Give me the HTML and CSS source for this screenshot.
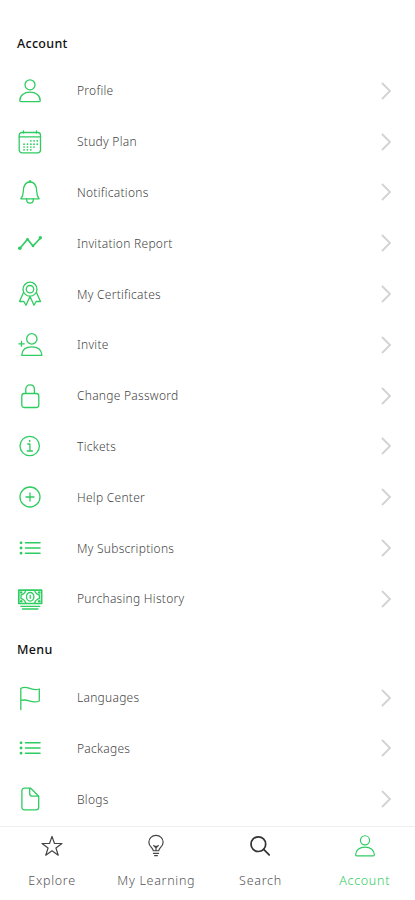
FILE: index.html
```html
<!DOCTYPE html>
<html lang="en">
<head>
  <meta charset="UTF-8">
  <meta name="viewport" content="width=device-width, initial-scale=1.0">
  <title>Account</title>
  <link rel="stylesheet" href="styles.css">
</head>
<body>
  <svg class="sprite" width="0" height="0">
    <symbol id="user" viewBox="0 0 24 24">
      <circle cx="12" cy="5.8" r="5"/>
      <path d="M1.8 21.5C1.800 16.500 6 13.200 12 13.200s10.200 3.300 10.200 8.300c0 .8-.4 1.200-1.200 1.200H3c-.8 0-1.200-.4-1.200-1.200z"/>
    </symbol>
    <symbol id="list" viewBox="0 0 24 24">
      <path d="M7.500 6.800H22M7.500 12H22M7.500 17.200H22" stroke-width="1.500"/>
      <path d="M3 6.800h.1M3 12h.1M3 17.200h.1" stroke-width="2.800"/>
    </symbol>
    <symbol id="chevron" viewBox="0 0 12 20">
      <path d="M2 2l8 8-8 8"/>
    </symbol>
  </svg>

  <main class="content">
    <section class="section">
      <h2>Account</h2>
      <ul class="menu-list">
        <li><a href="#">
          <svg class="icon"><use href="#user"/></svg>
          <span>Profile</span><svg class="arrow"><use href="#chevron"/></svg>
        </a></li>
        <li><a href="#">
          <svg class="icon" viewBox="0 0 24 24">
            <rect x="1.200" y="2.500" width="21.300" height="20.300" rx="2.800"/>
            <path d="M1.200 6.800h21.300M5.500 1v2M18.500 1v2"/>
            <path d="M12.800 10.800h.1M16 10.800h.1M19.200 10.800h.1M6 14.200h.1M9.400 14.200h.1M12.800 14.200h.1M16 14.200h.1M19.200 14.200h.1M6 17h.1M9.400 17h.1M12.800 17h.1M16 17h.1M6 19.800h.1M9.400 19.800h.1M12.800 19.800h.1" stroke-width="1.700"/>
          </svg>
          <span>Study Plan</span><svg class="arrow"><use href="#chevron"/></svg>
        </a></li>
        <li><a href="#">
          <svg class="icon" viewBox="0 0 24 24">
            <path d="M2.900 18.800c1.600-1.800 2.300-3.600 2.400-7.600C5.500 5.500 8 2 12 2s6.500 3.500 6.700 9.200c.1 4 .8 5.800 2.400 7.600z"/>
            <path d="M11.300 1.800V.9h1.400v.9M8.600 19c0 2.700 1.200 4.200 3.400 4.200s3.400-1.500 3.400-4.200"/>
          </svg>
          <span>Notifications</span><svg class="arrow"><use href="#chevron"/></svg>
        </a></li>
        <li><a href="#">
          <svg class="icon" viewBox="0 0 24 24">
            <path d="M2 17.200l7.500-8.900 5.500 6.700 7.500-8" stroke-width="1.700"/>
            <g class="filled"><circle cx="1.800" cy="17.200" r="1.800"/><circle cx="9.500" cy="8.200" r="1.300"/><circle cx="15" cy="15" r="1.300"/><circle cx="22.300" cy="6.800" r="1.700"/></g>
          </svg>
          <span>Invitation Report</span><svg class="arrow"><use href="#chevron"/></svg>
        </a></li>
        <li><a href="#">
          <svg class="icon" viewBox="0 0 24 24">
            <circle cx="12" cy="7.200" r="7"/>
            <circle cx="12" cy="7.200" r="3.700"/>
            <path d="M5.500 10.500L1.500 19.500l4.200-.2 2.300 4 4-8.700M18.500 10.500l4 9-4.200-.2-2.300 4-4-8.700"/>
          </svg>
          <span>My Certificates</span><svg class="arrow"><use href="#chevron"/></svg>
        </a></li>
        <li><a href="#">
          <svg class="icon" viewBox="0 0 24 24">
            <circle cx="13.800" cy="5.900" r="5.200"/>
            <path d="M3.700 22.300c.3-5.200 4-8.500 10.100-8.500s9.800 3.300 10.100 8.500z"/>
            <path d="M.8 10.800h5.400M3.500 8.400v4.800"/>
          </svg>
          <span>Invite</span><svg class="arrow"><use href="#chevron"/></svg>
        </a></li>
        <li><a href="#">
          <svg class="icon" viewBox="0 0 24 24">
            <rect x="3.800" y="9.500" width="17" height="14" rx="2.500"/>
            <path d="M7.800 9.200V5.300c0-2.600 1.700-4.500 4.300-4.500s4.300 1.900 4.300 4.500v3.900"/>
          </svg>
          <span>Change Password</span><svg class="arrow"><use href="#chevron"/></svg>
        </a></li>
        <li><a href="#">
          <svg class="icon" viewBox="0 0 24 24">
            <circle cx="11.700" cy="12" r="9.700"/>
            <path d="M9.700 10h2.200v6.800M9.200 17h5.200M11.700 6.300v1.300"/>
          </svg>
          <span>Tickets</span><svg class="arrow"><use href="#chevron"/></svg>
        </a></li>
        <li><a href="#">
          <svg class="icon" viewBox="0 0 24 24">
            <circle cx="12" cy="12" r="10"/>
            <path d="M8 12h8M12 8v8"/>
          </svg>
          <span>Help Center</span><svg class="arrow"><use href="#chevron"/></svg>
        </a></li>
        <li><a href="#">
          <svg class="icon"><use href="#list"/></svg>
          <span>My Subscriptions</span><svg class="arrow"><use href="#chevron"/></svg>
        </a></li>
        <li><a href="#">
          <svg class="icon" viewBox="0 0 24 24">
            <path d="M.8 3.200h22.800v13.300H.8z" stroke-width="1.700"/>
            <path d="M7.800 3.500C7 6 5.500 7.500 3 8v3.700c2.500.5 4 2 4.800 4.500M16.600 3.500c.8 2.500 2.300 4 4.800 4.500v3.700c-2.500.5-4 2-4.800 4.500"/>
            <ellipse cx="12.200" cy="9.800" rx="3.700" ry="4.300"/>
            <path d="M12.200 8.300v3M2.800 19.400h19M4.500 22h15.500"/>
            <g class="filled"><circle cx="3.200" cy="5.500" r="1.300"/><circle cx="21.200" cy="5.500" r="1.300"/><circle cx="3.200" cy="14.300" r="1.300"/><circle cx="21.200" cy="14.300" r="1.300"/></g>
          </svg>
          <span>Purchasing History</span><svg class="arrow"><use href="#chevron"/></svg>
        </a></li>
      </ul>
    </section>

    <section class="section">
      <h2>Menu</h2>
      <ul class="menu-list">
        <li><a href="#">
          <svg class="icon" viewBox="0 0 24 24">
            <path d="M2.800 23.500V2.500c2.200-1.500 5-1.600 8.200-.3 3.500 1.500 6.800 2 10.300.8V15c-3.500 1.600-6.800 1-10.300-.2-3.200-1-5.800-1-8.200-.3"/>
          </svg>
          <span>Languages</span><svg class="arrow"><use href="#chevron"/></svg>
        </a></li>
        <li><a href="#">
          <svg class="icon"><use href="#list"/></svg>
          <span>Packages</span><svg class="arrow"><use href="#chevron"/></svg>
        </a></li>
        <li><a href="#">
          <svg class="icon" viewBox="0 0 24 24">
            <path d="M6.500 1.200h6.200l8 8v11c0 1.600-1 2.600-2.600 2.600H6.500c-1.600 0-2.600-1-2.600-2.600V3.800c0-1.600 1-2.600 2.600-2.600z"/>
            <path d="M11.700 1.500v5.200c0 1.600.8 2.400 2.400 2.400h6.300"/>
          </svg>
          <span>Blogs</span><svg class="arrow"><use href="#chevron"/></svg>
        </a></li>
      </ul>
    </section>
  </main>

  <nav class="tab-bar">
    <a href="#">
      <svg class="icon" viewBox="0 0 24 24"><path d="M12 1.500l2.700 7.800h8.200l-6.600 4.900 2.500 7.900-6.800-4.800-6.800 4.800 2.500-7.900-6.600-4.900h8.200z"/></svg>
      <span>Explore</span>
    </a>
    <a href="#">
      <svg class="icon" viewBox="0 0 24 24">
        <path d="M9 17.200c0-3.200-4.800-4.400-4.800-9.200C4.200 3.800 7.500.4 12 .4s7.800 3.400 7.800 7.600c0 4.800-4.800 6-4.800 9.200zM9.200 20h5.600M10.500 22.500h3M9.500 11.500l2 2 .5-1.500.5 1.500 2-2M12 13.500v3.500"/>
      </svg>
      <span>My Learning</span>
    </a>
    <a href="#">
      <svg class="icon search" viewBox="0 0 24 24"><circle cx="10.200" cy="10" r="8"/><path d="M16 15.800l6 6"/></svg>
      <span>Search</span>
    </a>
    <a href="#" class="active">
      <svg class="icon"><use href="#user"/></svg>
      <span>Account</span>
    </a>
  </nav>
</body>
</html>
```
FILE: styles.css
```css
body {
  font-family: "Noto Sans", sans-serif;
  background-color: #ffffff;
  margin: 0;
  height: 900px;
  display: flex;
  flex-direction: column;
  overflow: hidden;
}

.sprite {
  display: none;
}

.content {
  flex: 1;
  padding-top: 17.5px;
}

h2 {
  margin: 0;
  padding-left: 17px;
  height: 48px;
  line-height: 51px;
  font-size: 12.5px;
  font-weight: 500;
  letter-spacing: 0.3px;
  color: #111111;
}

.menu-list {
  list-style: none;
  margin: 0;
  padding: 0;
}

.menu-list a {
  display: flex;
  align-items: center;
  height: 50.8px;
  padding: 0 23px 0 18px;
  font-size: 12px;
  font-weight: 300;
  letter-spacing: 0.27px;
  color: #444444;
  text-decoration: none;
}

.menu-list span {
  flex: 1;
  margin-left: 35px;
}

.icon {
  width: 24px;
  height: 24px;
  fill: none;
  stroke: #2fcc61;
  stroke-width: 1.3;
  stroke-linecap: round;
  stroke-linejoin: round;
  overflow: visible;
}

.icon .filled {
  fill: #2fcc61;
  stroke: none;
}

.arrow {
  width: 12px;
  height: 20px;
  fill: none;
  stroke: #d2d2d2;
  stroke-width: 1.8;
}

.tab-bar {
  display: grid;
  grid-template-columns: repeat(4, 104.2px);
  height: 73px;
  border-top: 1px solid #eeeeee;
  background: #ffffff;
}

.tab-bar a {
  display: flex;
  flex-direction: column;
  align-items: center;
  gap: 14px;
  padding-top: 8px;
  font-size: 12.5px;
  font-weight: 300;
  letter-spacing: 0.7px;
  line-height: 20px;
  color: #555555;
  text-decoration: none;
}

.tab-bar .icon {
  width: 22px;
  height: 22px;
  stroke: #444444;
}

.tab-bar .search {
  stroke: #333333;
  stroke-width: 1.9;
}

.tab-bar .active {
  color: #2fcc61;
}

.tab-bar .active .icon {
  stroke: #2fcc61;
}
```
